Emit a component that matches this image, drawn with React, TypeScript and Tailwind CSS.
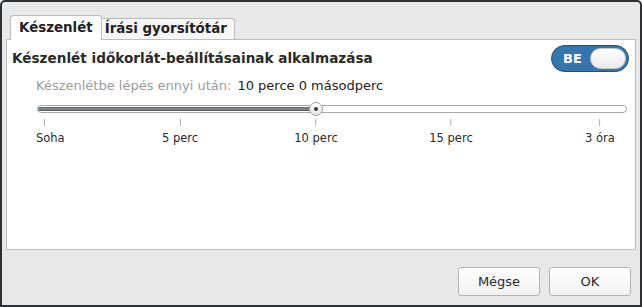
import React from "react";

const marks = [
  { label: "5 perc", left: "left-[143px]" },
  { label: "10 perc", left: "left-[279px]" },
  { label: "15 perc", left: "left-[414px]" },
  { label: "3 óra", left: "left-[563px]" },
];

export default function App() {
  return (
    <div className="w-[642px] h-[307px] bg-[#2d3136] rounded-t-[5px] p-[2px] font-['DejaVu_Sans',sans-serif]">
      <div className="w-full h-full bg-[#e8e8e9] flex flex-col rounded-t-[3px]">
        {/* Tabs */}
        <div className="flex items-end pl-[8px] pt-[12px] h-[37px]">
          <div className="relative z-10 h-[25px] px-[8px] flex items-center bg-white border border-b-0 border-[#bcbcbc] rounded-t-[4px] -mb-px text-[13.4px] font-bold text-[#222]">
            Készenlét
          </div>
          <div className="h-[21px] px-[3px] pr-[7px] flex items-center bg-[#f7f7f7] border border-b-0 border-l-0 border-[#bcbcbc] rounded-tr-[4px] text-[13.4px] font-bold text-[#222]">
            Írási gyorsítótár
          </div>
        </div>
        {/* Panel */}
        <div className="mx-[4px] h-[211px] bg-white border border-[#bdbdbd] flex flex-col">
          <div className="flex items-center justify-between pl-[5px] pr-[6px] pt-[5px]">
            <div className="text-[13.6px] font-bold text-[#2a2a2a]">
              Készenlét időkorlát-beállításainak alkalmazása
            </div>
            <div className="w-[78px] h-[27px] rounded-full bg-[#3775ad] border border-[#21507c] flex items-center justify-between pl-[11px] pr-[2px]">
              <span className="text-white font-bold text-[13px]">BE</span>
              <span className="w-[36px] h-[21px] rounded-full bg-gradient-to-b from-white to-[#e9e9e9] border border-[#c8c8c8]"></span>
            </div>
          </div>
          <div className="pl-[29px] pt-[4px] text-[13px] flex gap-[6px]">
            <span className="text-[#9b9b9b]">Készenlétbe lépés ennyi után:</span>
            <span className="text-[#222]">10 perce 0 másodperc</span>
          </div>
          {/* Slider */}
          <div className="ml-[30px] w-[590px] relative mt-[9px]">
            <div className="h-[8px] rounded-full border border-[#a8a8a8] bg-white relative">
              <div className="absolute left-0 top-[1px] h-[4px] w-[280px] rounded-full bg-gradient-to-b from-[#555b61] via-[#8e949a] to-[#464c52]"></div>
            </div>
            <div className="absolute left-[272px] top-[-3px] w-[14px] h-[14px] rounded-full bg-gradient-to-b from-white to-[#e6e6e6] border border-[#a0a0a0] flex items-center justify-center">
              <span className="w-[4px] h-[4px] rounded-full bg-[#3a3a3a]"></span>
            </div>
            <div className="relative h-[34px]">
              <div className="absolute top-[6px] left-[-1px] flex flex-col items-start">
                <div className="w-px h-[7px] bg-[#b0b0b0] ml-[8px]"></div>
                <div className="text-[11.5px] text-[#2a2a2a] mt-[4px] whitespace-nowrap">Soha</div>
              </div>
              {marks.map((m) => (
                <div key={m.label} className={`absolute top-[6px] ${m.left} -translate-x-1/2 flex flex-col items-center`}>
                  <div className="w-px h-[7px] bg-[#b0b0b0]"></div>
                  <div className="text-[11.5px] text-[#2a2a2a] mt-[4px] whitespace-nowrap">{m.label}</div>
                </div>
              ))}
            </div>
          </div>
        </div>
        {/* Buttons */}
        <div className="flex justify-end gap-[9px] pr-[9px] pt-[17px]">
          <button className="w-[82px] h-[29px] rounded-[3px] border border-[#b3b3b3] bg-gradient-to-b from-white to-[#f1f1f1] text-[13px] text-[#2a2a2a]">
            Mégse
          </button>
          <button className="w-[82px] h-[29px] rounded-[3px] border border-[#b3b3b3] bg-gradient-to-b from-white to-[#f1f1f1] text-[13px] text-[#2a2a2a]">
            OK
          </button>
        </div>
      </div>
    </div>
  );
}
